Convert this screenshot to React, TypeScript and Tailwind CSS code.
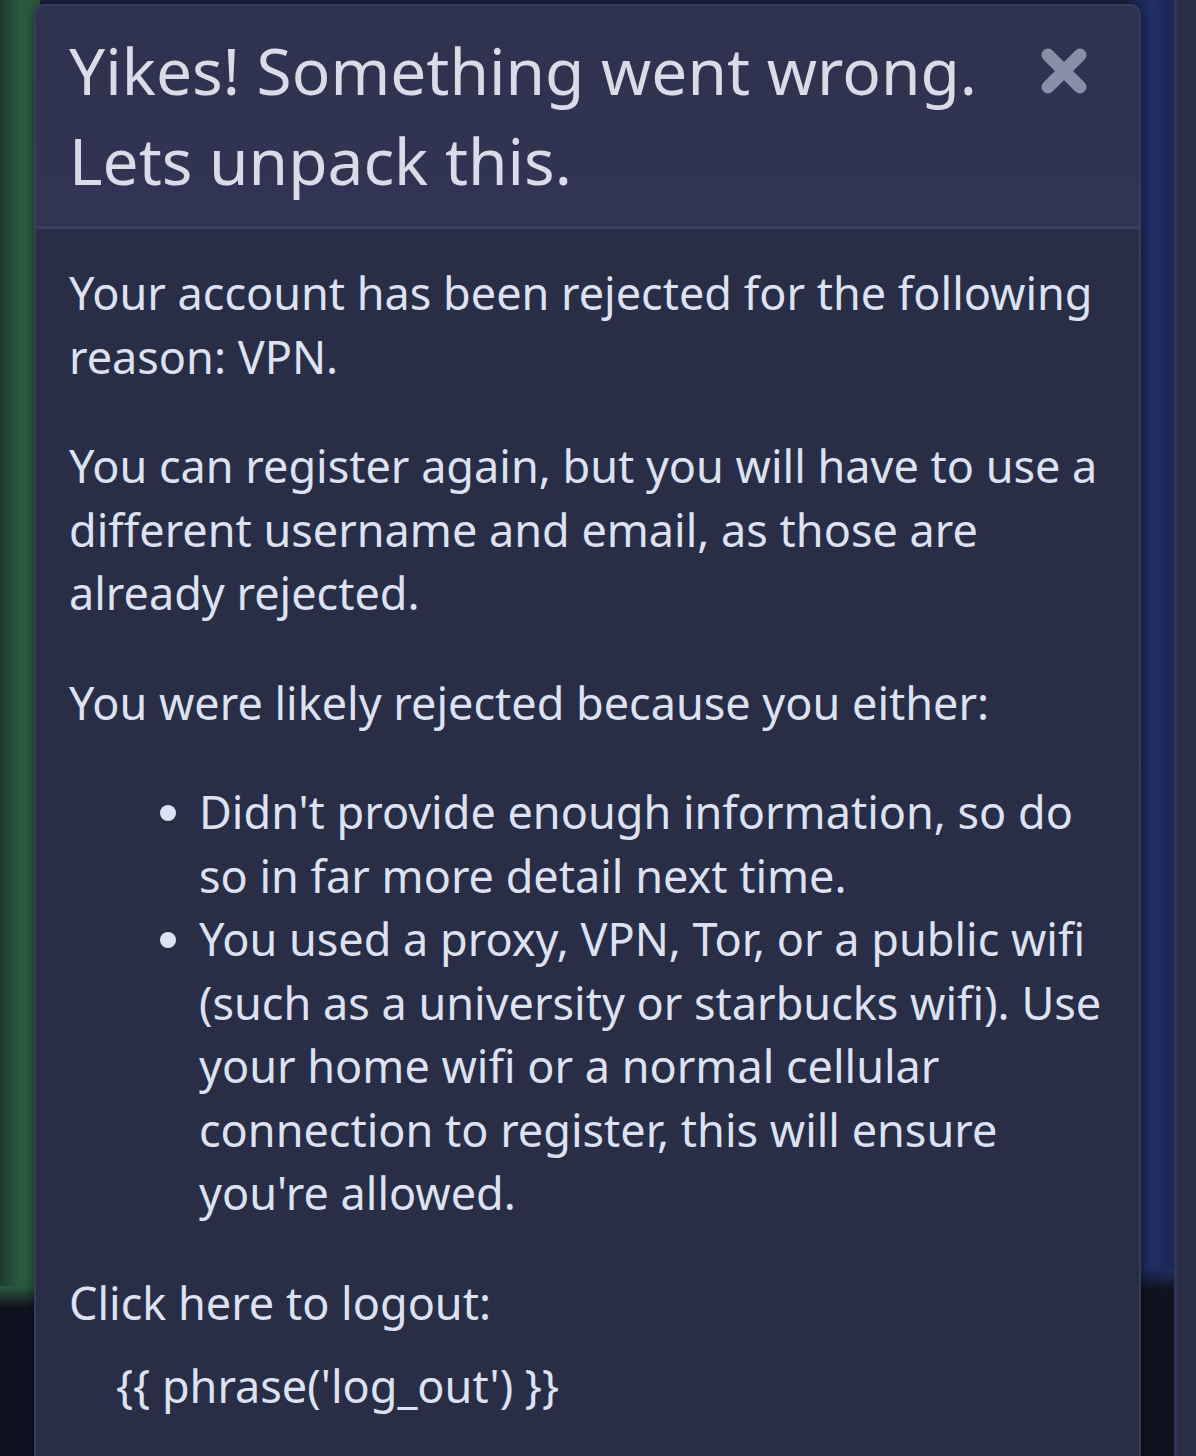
import React from "react";

function Column({ className, fade, dark }: { className: string; fade: string; dark: string }) {
  return (
    <div className="flex flex-col h-full">
      <div className={`flex-1 ${className}`} />
      <div className={`h-[22px] bg-gradient-to-b ${fade} to-[#10131f]`} />
      <div className={`${dark} bg-[#10131f]`} />
    </div>
  );
}

export default function App() {
  return (
    <div
      className="relative w-[1196px] h-[1456px] overflow-hidden bg-[#10131f]"
      style={{ fontFamily: '"Noto Sans", "Open Sans", sans-serif' }}
    >
      {/* background page */}
      <div className="flex h-full">
        <div className="w-[40px] h-full">
          <Column
            className="bg-gradient-to-r from-[#1d3a2b] via-[#2b5a40] to-[#2c5c42]"
            fade="from-[#2b5a40]"
            dark="h-[148px]"
          />
        </div>
        <div className="flex-1 h-full">
          <Column className="bg-[#1c2340]" fade="from-[#1c2340]" dark="h-[160px]" />
        </div>
        <div className="w-[44px] h-full">
          <Column
            className="bg-gradient-to-r from-[#1b2754] via-[#203066] to-[#1a2552]"
            fade="from-[#1f2e62]"
            dark="h-[166px]"
          />
        </div>
        <div className="w-[22px] h-full bg-[#2a2f47] border-l-[3px] border-[#303655]" />
      </div>

      {/* modal overlay */}
      <div className="absolute left-[34px] top-[4px] w-[1107px] h-[1470px] rounded-t-[11px] border-2 border-[#363c5b] bg-[#292e46] shadow-[0_0_12px_rgba(0,0,0,0.5)] overflow-hidden">
        <div className="flex items-start justify-between bg-gradient-to-b from-[#2e324e] to-[#313553] border-b-[3px] border-[#394060] pl-[33px] pr-[52px] pt-[20px] pb-[20px]">
          <h1 className="text-[64px] leading-[90px] text-[#d9dbe6] font-normal">
            Yikes! Something went wrong.
            <br />
            Lets unpack this.
          </h1>
          <svg width="46" height="46" viewBox="0 0 46 46" className="mt-[22px] shrink-0">
            <path d="M7 7 L39 39 M39 7 L7 39" stroke="#8a8ea8" strokeWidth="13" strokeLinecap="round" />
          </svg>
        </div>
        <div className="flex flex-col gap-[46px] pl-[33px] pr-[30px] pt-[32px] text-[45px] leading-[63.5px] text-[#dde2f2]">
          <p>Your account has been rejected for the following reason: VPN.</p>
          <p>
            You can register again, but you will have to use a different username and email, as those are already rejected.
          </p>
          <p>You were likely rejected because you either:</p>
          <ul className="pl-[130px] list-disc">
            <li>Didn't provide enough information, so do so in far more detail next time.</li>
            <li>
              You used a proxy, VPN, Tor, or a public wifi (such as a university or starbucks wifi). Use your home wifi or a normal cellular connection to register, this will ensure you're allowed.
            </li>
          </ul>
          <div className="flex flex-col gap-[20px]">
            <p>Click here to logout:</p>
            <p className="pl-[47px]">{"{{ phrase('log_out') }}"}</p>
          </div>
        </div>
      </div>
    </div>
  );
}
